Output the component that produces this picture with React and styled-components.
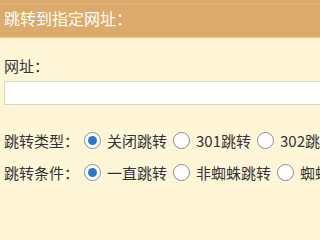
import React, { useState } from "react";
import styled, { createGlobalStyle } from "styled-components";

const GlobalStyle = createGlobalStyle`
  html, body {
    margin: 0;
    padding: 0;
    background: #fff6d8;
    overflow: hidden;
  }
  body {
    font-family: "Noto Sans CJK SC", "Noto Sans", sans-serif;
    color: #333;
  }
`;

const Panel = styled.div`
  width: 100vw;
  height: 100vh;
  background: #fff6d8;
  overflow: hidden;
`;

const Header = styled.div`
  height: 37px;
  line-height: 37px;
  padding-left: 4px;
  background: #dcaa6a;
  border-bottom: 1px solid #e3c89c;
  box-shadow: inset 0 4px 0 #dcaa6a, inset 0 5px 0 #dfb47e;
  color: #fff;
  font-size: 16px;
  white-space: nowrap;
`;

const Body = styled.div`
  padding: 18px 0 0 4px;
`;

const FieldLabel = styled.div`
  font-size: 15px;
  line-height: 20px;
  height: 20px;
`;

const UrlInput = styled.input`
  display: block;
  box-sizing: border-box;
  margin-top: 5px;
  width: calc(100% + 20px);
  height: 24px;
  border: 1px solid #dcd6c6;
  background: #fff;
  outline: none;
  padding: 0 4px;
`;

const OptionRow = styled.div`
  display: flex;
  align-items: center;
  height: 24px;
  margin-top: ${(p) => p.$gap}px;
  font-size: 15px;
  white-space: nowrap;
`;

const RowLabel = styled.span`
  width: 80px;
  flex-shrink: 0;
`;

const Option = styled.label`
  display: flex;
  align-items: center;
  gap: 6px;
  margin-right: 6px;
  flex-shrink: 0;
  cursor: pointer;
`;

const RadioMark = styled.span`
  box-sizing: border-box;
  width: 17px;
  height: 17px;
  border-radius: 50%;
  border: 1px solid #8a8a8a;
  background: #fff;
  display: flex;
  align-items: center;
  justify-content: center;
  flex-shrink: 0;

  &::after {
    content: "";
    width: 9px;
    height: 9px;
    border-radius: 50%;
    background: ${(p) => (p.$checked ? "#2b78c8" : "transparent")};
  }
`;

function RadioGroup({ label, options, gap }) {
  const [value, setValue] = useState(options[0]);
  return (
    <OptionRow $gap={gap}>
      <RowLabel>{label}</RowLabel>
      {options.map((o) => (
        <Option key={o} onClick={() => setValue(o)}>
          <RadioMark $checked={value === o} />
          {o}
        </Option>
      ))}
    </OptionRow>
  );
}

export default function App() {
  return (
    <Panel>
      <GlobalStyle />
      <Header>跳转到指定网址：</Header>
      <Body>
        <FieldLabel>网址：</FieldLabel>
        <UrlInput type="text" />
        <RadioGroup
          label="跳转类型："
          options={["关闭跳转", "301跳转", "302跳转"]}
          gap={23}
        />
        <RadioGroup
          label="跳转条件："
          options={["一直跳转", "非蜘蛛跳转", "蜘蛛跳转"]}
          gap={8}
        />
      </Body>
    </Panel>
  );
}
